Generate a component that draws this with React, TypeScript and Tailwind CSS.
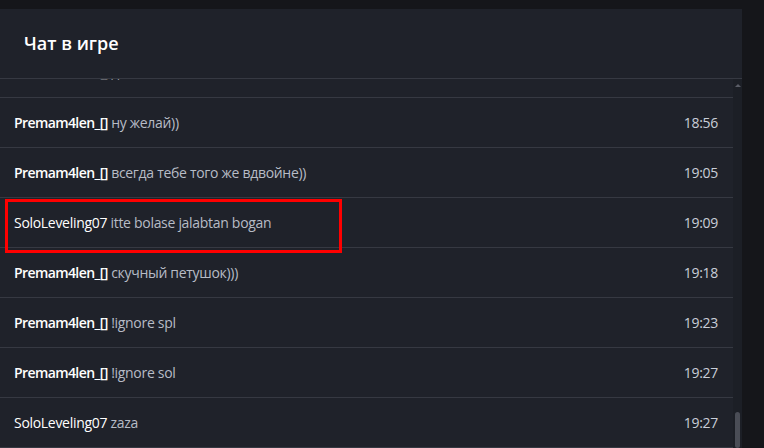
import React from 'react';

type Msg = { name: string; text: string; time: string; bold?: boolean };

const messages: Msg[] = [
  { name: 'Premam4len_[]', text: 'ну желай))', time: '18:56', bold: true },
  { name: 'Premam4len_[]', text: 'всегда тебе того же вдвойне))', time: '19:05', bold: true },
  { name: 'SoloLeveling07', text: 'itte bolase jalabtan bogan', time: '19:09' },
  { name: 'Premam4len_[]', text: 'скучный петушок)))', time: '19:18', bold: true },
  { name: 'Premam4len_[]', text: '!ignore spl', time: '19:23', bold: true },
  { name: 'Premam4len_[]', text: '!ignore sol', time: '19:27', bold: true },
  { name: 'SoloLeveling07', text: 'zaza', time: '19:27' },
];

function Row({ m, highlight, className = '' }: { m: Msg; highlight?: boolean; className?: string }) {
  return (
    <div
      className={`relative flex h-[50px] shrink-0 items-center justify-between border-b border-[#363942] pl-[14px] pr-[15px] text-[14px] tracking-[-0.3px] ${className}`}
    >
      <div className="whitespace-nowrap">
        <span className={m.bold ? 'font-semibold tracking-[-0.6px] text-white' : 'text-white'}>{m.name}</span>{' '}
        <span className="text-[#b7bcc6]">{m.text}</span>
      </div>
      <span className="text-[#c9ced8]">{m.time}</span>
      {highlight && (
        <div className="pointer-events-none absolute left-[5px] top-[1px] h-[54px] w-[337px] border-[3px] border-[#ff0000]" />
      )}
    </div>
  );
}

export default function App() {
  return (
    <div
      className="flex h-[448px] w-[764px] flex-col overflow-hidden bg-[#15161a] pt-[9px]"
      style={{ fontFamily: '"Open Sans", "Noto Sans", sans-serif' }}
    >
      <div className="flex min-h-0 w-[742px] flex-1 flex-col bg-[#1f222a]">
        <div className="flex h-[70px] shrink-0 items-center border-b border-[#363942] pl-[24px]">
          <h2 className="text-[18px] font-semibold text-white">Чат в игре</h2>
        </div>
        <div className="flex min-h-0 flex-1">
          <div className="flex min-w-0 flex-1 flex-col overflow-hidden">
            <div className="-mt-[31px]">
              <Row m={{ name: 'Premam4len_[]', text: 'да', time: '18:50', bold: true }} className="pb-[2px]" />
            </div>
            {messages.map((m, i) => (
              <Row key={i} m={m} highlight={i === 2} />
            ))}
          </div>
          <div className="relative w-[9px] shrink-0 bg-[#1c1f26]">
            <div className="mx-auto mt-[5px] h-0 w-0 border-x-[3px] border-b-[3px] border-x-transparent border-b-[#5a5d66]" />
            <div className="absolute bottom-0 left-[2px] h-[36px] w-[5px] rounded-full bg-[#4a4d56]" />
          </div>
        </div>
      </div>
    </div>
  );
}
